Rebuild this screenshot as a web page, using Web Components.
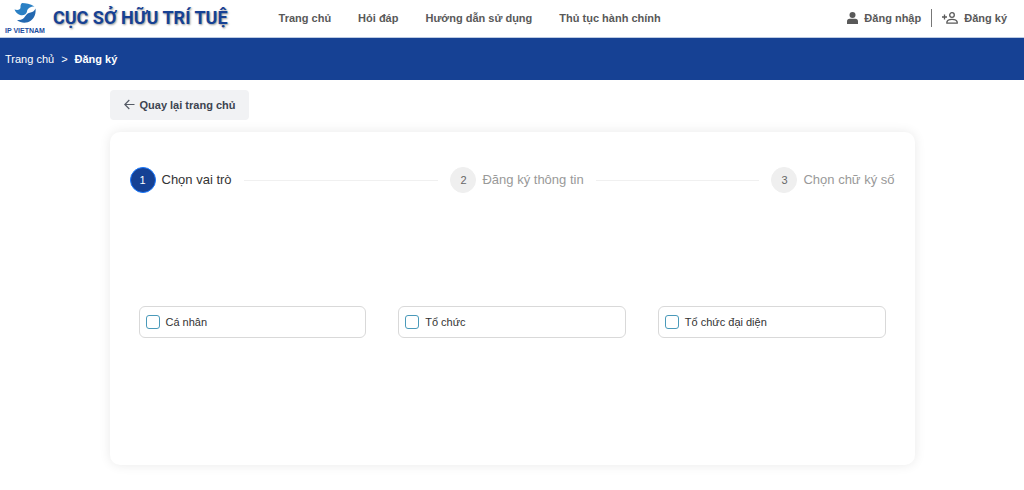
<!DOCTYPE html>
<html lang="vi">
<head>
<meta charset="utf-8">
<meta name="viewport" content="width=device-width, initial-scale=1">
<title>Đăng ký - Cục Sở hữu trí tuệ</title>
<style>
  body { margin: 0; background: #fff; font: 11px/16px "Liberation Sans", Arial, sans-serif; color: #333; }
</style>
</head>
<body>
<register-page></register-page>

<script>
const define = (name, html) => {
  const template = document.createElement('template');
  template.innerHTML = html;
  customElements.define(name, class extends HTMLElement {
    constructor() {
      super();
      this.attachShadow({ mode: 'open' }).append(template.content.cloneNode(true));
    }
  });
};

define('ip-logo', `
  <style>
    :host { display: flex; align-items: center; gap: 8px; color: #1a4a9e; }
    .mark { display: flex; flex-direction: column; align-items: center; gap: 3px; }
    svg { display: block; }
    small { font-size: 7px; line-height: 8px; font-weight: bold; white-space: nowrap; }
    strong { padding-bottom: 2px; font: bold 18px/24px Roboto, "Liberation Sans", sans-serif; color: #164194; text-shadow: 1px 1px 2px #999; white-space: nowrap; }
  </style>
  <div class="mark">
    <svg width="22" height="22" viewBox="0 0 22 22" aria-hidden="true">
      <path fill="#2b80c4" d="M8 1C12 1 16 1.500 20.500 4.500C16.500 4.500 13.500 6 13 9.500C12.500 12.500 9.500 14 6 13C3 12 1.500 10 .5 7.500C4 8.500 6.500 7.500 6.500 5.500C6.500 3.500 6.500 2.500 8 1Z"/>
      <path fill="#2468b0" d="M21.500 6.500C22 11 21 15.500 17 18.500C13 21.500 7 21.500 3 18C7.500 18.500 9.500 17 11 14.500C12.500 12 14 11 16.500 10.500C19 10 20.500 9 21.500 6.500Z"/>
    </svg>
    <small>IP VIETNAM</small>
  </div>
  <strong>CỤC SỞ HỮU TRÍ TUỆ</strong>
`);

define('nav-link', `
  <style>
    :host { display: block; }
    a { display: flex; align-items: center; gap: 6px; color: #595959; font-weight: bold; text-decoration: none; white-space: nowrap; }
  </style>
  <a href="#"><slot name="icon"></slot><slot></slot></a>
`);

define('site-header', `
  <style>
    :host { display: block; }
    header { display: flex; align-items: center; height: 37px; padding: 0 17px 0 5px; border-bottom: 1px solid #bccbe3; }
    nav { display: flex; gap: 27px; margin-left: 51px; padding-bottom: 1px; }
    .account { display: flex; align-items: center; gap: 10px; margin-left: auto; padding-bottom: 1px; }
    .account i { width: 1px; height: 18px; background: #777; }
    svg { display: block; }
  </style>
  <header>
    <ip-logo></ip-logo>
    <nav>
      <nav-link>Trang chủ</nav-link>
      <nav-link>Hỏi đáp</nav-link>
      <nav-link>Hướng dẫn sử dụng</nav-link>
      <nav-link>Thủ tục hành chính</nav-link>
    </nav>
    <div class="account">
      <nav-link>
        <svg slot="icon" width="11" height="12" viewBox="0 0 11 12" fill="#595959" aria-hidden="true"><circle cx="5.500" cy="3" r="3"/><path d="M0 12V9.500Q0 6.800 2.700 6.800H8.300Q11 6.800 11 9.500V12Z"/></svg>
        Đăng nhập</nav-link>
      <i></i>
      <nav-link>
        <svg slot="icon" width="16" height="12" viewBox="0 0 16 12" fill="none" stroke="#595959" stroke-width="1.300" aria-hidden="true"><circle cx="10" cy="3" r="2.300"/><path d="M4.900 11.200V10Q5.500 7.400 10 7.400T15.200 10V11.200ZM0 5H5M2.500 2.500V7.500"/></svg>
        Đăng ký</nav-link>
    </div>
  </header>
`);

define('bread-crumb', `
  <style>
    :host { display: block; background: #164194; color: #fff; }
    nav { display: flex; align-items: center; gap: 7px; height: 42px; padding: 0 5px; }
    a { color: inherit; text-decoration: none; }
  </style>
  <nav aria-label="Breadcrumb"><a href="#">Trang chủ</a><span>&gt;</span><b>Đăng ký</b></nav>
`);

define('back-button', `
  <style>
    :host { display: inline-block; vertical-align: top; }
    button { display: flex; align-items: center; gap: 4px; height: 30px; padding: 0 14px; border: 0; border-radius: 4px; background: #f1f2f4; color: #3d4450; font: inherit; font-weight: bold; white-space: nowrap; }
    svg { display: block; }
  </style>
  <button type="button">
    <svg width="12" height="12" viewBox="0 0 12 12" fill="none" stroke="#555b66" stroke-width="1.200" aria-hidden="true"><path d="M10.500 5.500H.8M5.300 1L.8 5.500L5.300 10"/></svg>
    <slot></slot>
  </button>
`);

define('step-item', `
  <style>
    :host { display: flex; align-items: center; flex: 1; color: #999; font-size: 13px; line-height: 20px; }
    :host([last]) { flex: none; }
    .dot { display: grid; place-items: center; box-sizing: border-box; width: 26px; height: 26px; margin-right: 6px; border: 1px solid #efefef; border-radius: 50%; background: #efefef; color: #666; font-size: 11px; }
    .title { white-space: nowrap; }
    .line { flex: 1; height: 1px; margin: 0 12px; background: #f0f0f0; }
    :host([last]) .line { display: none; }
    :host([active]) { color: #333; }
    :host([active]) .dot { background: #164194; border-color: #1677ff; color: #fff; }
  </style>
  <span class="dot"><slot name="number"></slot></span>
  <span class="title"><slot></slot></span>
  <span class="line"></span>
`);

define('role-option', `
  <style>
    :host { display: block; }
    label { display: flex; align-items: center; gap: 6px; box-sizing: border-box; height: 32px; padding: 0 6px; border: 1px solid #d9d9d9; border-radius: 6px; color: #333; }
    input { appearance: none; box-sizing: border-box; width: 14px; height: 14px; margin: 0; border: 1px solid #4a9aba; border-radius: 3px; background: #fff; }
    input:checked { background: #164194; }
  </style>
  <label><input type="checkbox"><slot></slot></label>
`);

define('register-page', `
  <style>
    :host { display: block; }
    main { max-width: 805px; margin: 0 auto; padding: 10px 16px 25px; }
    .card { margin-top: 12px; padding: 35px 20px 127px; border-radius: 10px; background: #fff; box-shadow: 0 0 12px rgba(0,0,0,.09); }
    .steps { display: flex; }
    .roles { display: grid; grid-template-columns: repeat(auto-fit, minmax(180px, 1fr)); gap: 32px; margin: 113px 9px 0; }
  </style>
  <site-header></site-header>
  <bread-crumb></bread-crumb>
  <main>
    <back-button>Quay lại trang chủ</back-button>
    <section class="card">
      <div class="steps">
        <step-item active><span slot="number">1</span>Chọn vai trò</step-item>
        <step-item><span slot="number">2</span>Đăng ký thông tin</step-item>
        <step-item last><span slot="number">3</span>Chọn chữ ký số</step-item>
      </div>
      <div class="roles">
        <role-option>Cá nhân</role-option>
        <role-option>Tổ chức</role-option>
        <role-option>Tổ chức đại diện</role-option>
      </div>
    </section>
  </main>
`);
</script>
</body>
</html>
